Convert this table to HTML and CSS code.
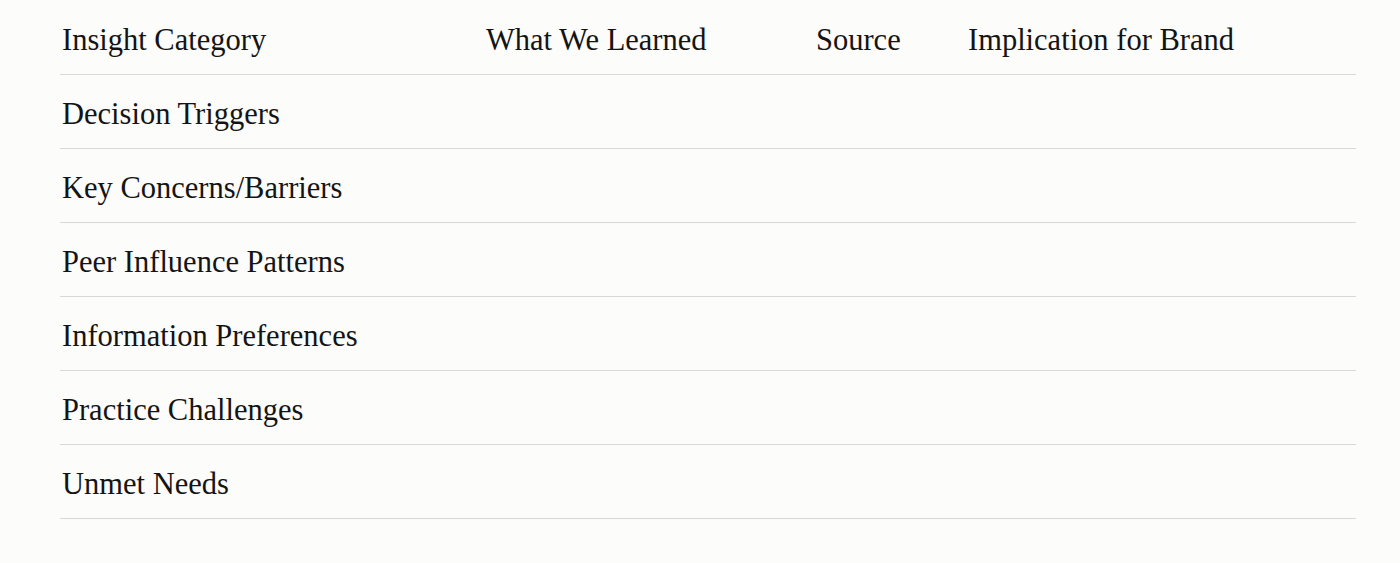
FILE: index.html
```html
<!DOCTYPE html>
<html lang="en">
<head>
<meta charset="utf-8">
<title>Insights</title>
<link rel="stylesheet" href="styles.css">
</head>
<body>
<div class="page">
  <table class="insights">
    <colgroup>
      <col class="c1"><col class="c2"><col class="c3"><col class="c4">
    </colgroup>
    <thead>
      <tr><th>Insight Category</th><th>What We Learned</th><th>Source</th><th>Implication for Brand</th></tr>
    </thead>
    <tbody>
      <tr><td>Decision Triggers</td><td></td><td></td><td></td></tr>
      <tr><td>Key Concerns/Barriers</td><td></td><td></td><td></td></tr>
      <tr><td>Peer Influence Patterns</td><td></td><td></td><td></td></tr>
      <tr><td>Information Preferences</td><td></td><td></td><td></td></tr>
      <tr><td>Practice Challenges</td><td></td><td></td><td></td></tr>
      <tr><td>Unmet Needs</td><td></td><td></td><td></td></tr>
    </tbody>
  </table>
</div>
</body>
</html>
```
FILE: styles.css
```css
html, body {
  margin: 0;
  padding: 0;
  background: #fcfcfa;
}
body {
  font-family: "Liberation Serif", "Times New Roman", serif;
  color: #141414;
}
.page {
  padding: 0 44px 0 60px;
}
.insights {
  width: 1296px;
  border-collapse: collapse;
  table-layout: fixed;
}
.c1 { width: 424px; }
.c2 { width: 330px; }
.c3 { width: 152px; }
.c4 { width: 390px; }
.insights th,
.insights td {
  height: 74px;
  padding: 7px 0 0 2px;
  box-sizing: border-box;
  font-size: 30.5px;
  font-weight: normal;
  text-align: left;
  vertical-align: middle;
  border-bottom: 1px solid #d8d8d6;
  white-space: nowrap;
}
```
